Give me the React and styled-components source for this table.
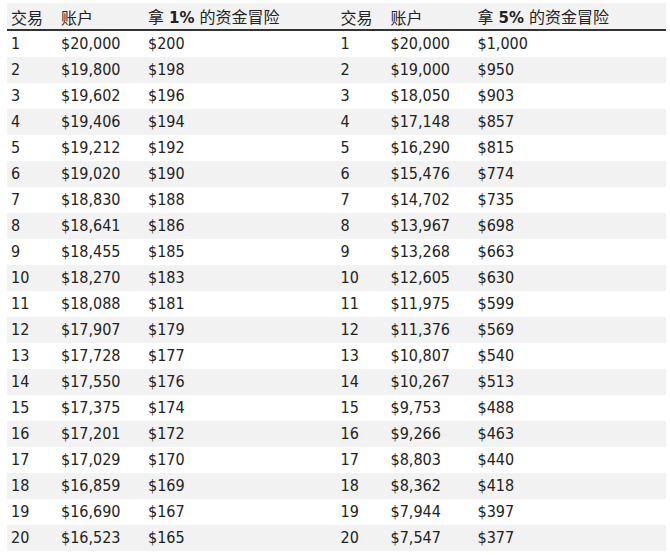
import React from "react";
import styled, { createGlobalStyle } from "styled-components";

const Global = createGlobalStyle`
  html, body { margin: 0; padding: 0; background: #fff; }
  body {
    font-family: "DejaVu Sans Condensed", "DejaVu Sans", "Noto Sans CJK SC", sans-serif;
    font-stretch: condensed;
    color: #222;
  }
`;

const Page = styled.div`
  display: flex;
  padding: 3px 4px 0 7px;
  width: 659px;
`;

const Table = styled.div`
  flex: 1;
  display: flex;
  flex-direction: column;
`;

const Row = styled.div`
  display: grid;
  grid-template-columns: 50px 87px 1fr;
  height: 26px;
  align-items: center;
  background: ${(p) => (p.$striped ? "#f2f2f2" : "#fff")};
  font-size: 16px;
`;

const HeadRow = styled(Row)`
  background: #f2f2f2;
  border-bottom: 2px solid #333;
  font-family: "Noto Sans CJK SC", "DejaVu Sans", sans-serif;
  font-stretch: normal;
`;

const Cell = styled.div`
  padding-left: 4px;
  white-space: nowrap;
  line-height: 26px;
`;

const Pct = styled.b`
  font-family: "DejaVu Sans", sans-serif;
  font-weight: 700;
  font-size: 15px;
  margin: 0 5px;
`;

const left = [
  ["$20,000", "$200"], ["$19,800", "$198"], ["$19,602", "$196"], ["$19,406", "$194"],
  ["$19,212", "$192"], ["$19,020", "$190"], ["$18,830", "$188"], ["$18,641", "$186"],
  ["$18,455", "$185"], ["$18,270", "$183"], ["$18,088", "$181"], ["$17,907", "$179"],
  ["$17,728", "$177"], ["$17,550", "$176"], ["$17,375", "$174"], ["$17,201", "$172"],
  ["$17,029", "$170"], ["$16,859", "$169"], ["$16,690", "$167"], ["$16,523", "$165"],
];

const right = [
  ["$20,000", "$1,000"], ["$19,000", "$950"], ["$18,050", "$903"], ["$17,148", "$857"],
  ["$16,290", "$815"], ["$15,476", "$774"], ["$14,702", "$735"], ["$13,967", "$698"],
  ["$13,268", "$663"], ["$12,605", "$630"], ["$11,975", "$599"], ["$11,376", "$569"],
  ["$10,807", "$540"], ["$10,267", "$513"], ["$9,753", "$488"], ["$9,266", "$463"],
  ["$8,803", "$440"], ["$8,362", "$418"], ["$7,944", "$397"], ["$7,547", "$377"],
];

function RiskTable({ pct, rows }) {
  return (
    <Table>
      <HeadRow>
        <Cell>交易</Cell>
        <Cell>账户</Cell>
        <Cell>
          拿<Pct>{pct}</Pct>的资金冒险
        </Cell>
      </HeadRow>
      {rows.map((r, i) => (
        <Row key={i} $striped={i % 2 === 1}>
          <Cell>{i + 1}</Cell>
          <Cell>{r[0]}</Cell>
          <Cell>{r[1]}</Cell>
        </Row>
      ))}
    </Table>
  );
}

export default function App() {
  return (
    <>
      <Global />
      <Page>
        <RiskTable pct="1%" rows={left} />
        <RiskTable pct="5%" rows={right} />
      </Page>
    </>
  );
}
